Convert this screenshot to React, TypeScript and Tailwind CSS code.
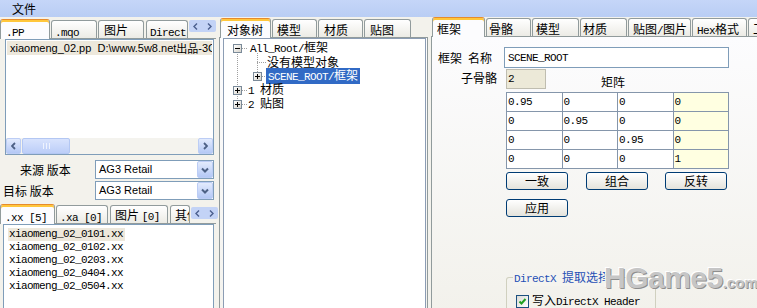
import type { ReactNode } from 'react';

const mono = "font-['Liberation_Mono','Noto_Sans_CJK_SC',monospace] text-[11px] tracking-[-0.6px]";

function M({ children }: { children: ReactNode }) {
  return <span className={mono}>{children}</span>;
}

function Tab({ children, active, className = '' }: { children: ReactNode; active?: boolean; className?: string }) {
  if (active) {
    return (
      <div
        className={`relative z-10 -mb-px h-[20px] shrink-0 overflow-hidden whitespace-nowrap rounded-t-[3px] border border-b-0 border-[#919b9c] border-t-[#e68b2c] bg-[#fcfcfe] pt-[2px] leading-[15px] shadow-[inset_0_2px_0_#ffc73c] ${className}`}
      >
        {children}
      </div>
    );
  }
  return (
    <div
      className={`h-[18px] shrink-0 overflow-hidden whitespace-nowrap rounded-t-[3px] border border-b-0 border-[#919b9c] bg-gradient-to-b from-white to-[#ecebe5] pt-[1px] leading-[15px] ${className}`}
    >
      {children}
    </div>
  );
}

function TabArrows({ className = '' }: { className?: string }) {
  return (
    <div className={`flex h-[12px] w-[27px] shrink-0 self-start items-center justify-around rounded-[2px] bg-[#c3d3f6] ${className}`}>
      <svg width="5" height="7" viewBox="0 0 5 7">
        <path d="M4 0.5 L1 3.5 L4 6.5" stroke="#4b5f8e" strokeWidth="1.4" fill="none" />
      </svg>
      <svg width="5" height="7" viewBox="0 0 5 7">
        <path d="M1 0.5 L4 3.5 L1 6.5" stroke="#4b5f8e" strokeWidth="1.4" fill="none" />
      </svg>
    </div>
  );
}

function Combo({ value }: { value: string }) {
  return (
    <div className="flex h-[19px] w-[119px] items-center border border-[#7f9db9] bg-white pl-[3px]">
      <span className="flex-1 font-['Liberation_Sans',sans-serif] text-[11px] leading-[13px]">{value}</span>
      <div className="flex h-[17px] w-[16px] items-center justify-center rounded-[2px] border border-[#bccdf5] bg-gradient-to-b from-[#e3ebfd] to-[#b4c8f5]">
        <svg width="8" height="6" viewBox="0 0 8 6">
          <path d="M1 1.5 L4 4.5 L7 1.5" stroke="#4d6185" strokeWidth="2" fill="none" />
        </svg>
      </div>
    </div>
  );
}

function ScrollBtn({ dir }: { dir: 'left' | 'right' }) {
  return (
    <div className="flex h-[16px] w-[15px] items-center justify-center rounded-[2px] border border-[#bccdf5] bg-gradient-to-b from-[#e3ebfd] to-[#b4c8f5]">
      <svg width="5" height="8" viewBox="0 0 5 8">
        <path d={dir === 'left' ? 'M4 1 L1 4 L4 7' : 'M1 1 L4 4 L1 7'} stroke="#4d6185" strokeWidth="1.8" fill="none" />
      </svg>
    </div>
  );
}

function Expander({ open }: { open?: boolean }) {
  return (
    <span className="flex h-[9px] w-[9px] shrink-0 items-center justify-center border border-[#7a8a99] bg-gradient-to-br from-white to-[#d6d3cb]">
      <svg width="7" height="7" viewBox="0 0 7 7">
        <path d={open ? 'M1 3.5h5' : 'M1 3.5h5M3.5 1v5'} stroke="#000" strokeWidth="1" />
      </svg>
    </span>
  );
}

function XpButton({ children }: { children: ReactNode }) {
  return (
    <button
      type="button"
      className="flex h-[18px] w-[62px] items-center justify-center rounded-[3px] border border-[#003c74] bg-gradient-to-b from-white to-[#e4e3dc] text-[12px] leading-[14px]"
    >
      {children}
    </button>
  );
}

const matrix = [
  ['0.95', '0', '0', '0'],
  ['0', '0.95', '0', '0'],
  ['0', '0', '0.95', '0'],
  ['0', '0', '0', '1'],
];

const xxFiles = ['xiaomeng_02_0101.xx', 'xiaomeng_02_0102.xx', 'xiaomeng_02_0203.xx', 'xiaomeng_02_0404.xx', 'xiaomeng_02_0504.xx'];

function LeftPanel() {
  return (
    <div className="flex w-[216px] shrink-0 flex-col pt-[1px]">
      <div className="flex h-[21px] items-end gap-[1px] border-b border-[#919b9c]">
        <Tab active className="w-[50px] pl-[5px] pt-[3px]">
          <M>.PP</M>
        </Tab>
        <Tab className="w-[46px] pl-[3px] pt-[2px]">
          <M>.mqo</M>
        </Tab>
        <Tab className="w-[46px] pl-[5px]">图片</Tab>
        <Tab className="ml-[1px] w-[42px] pl-[3px] pt-[2px]">
          <M>Direct</M>
        </Tab>
        <TabArrows className="mt-[2px]" />
      </div>
      <div className="pl-[5px] pr-[2px]">
        <div className="flex h-[116px] flex-col border border-[#7f9db9] bg-white">
          <div className="mx-px mt-px flex h-[14px] items-center overflow-hidden whitespace-nowrap bg-[#ede8dc] pl-[3px]">
            <span className="font-['Liberation_Sans',sans-serif] text-[11px] leading-[13px]">xiaomeng_02.pp&nbsp; D:\www.5w8.net</span>
            <span className="text-[11px] leading-[13px]">出品</span>
            <span className="font-['Liberation_Sans',sans-serif] text-[11px] leading-[13px]">-3C</span>
          </div>
          <div className="flex-1" />
          <div className="flex h-[16px] bg-[#f4f3ee]">
            <ScrollBtn dir="left" />
            <div className="ml-px flex w-[48px] items-center justify-center gap-[2px] rounded-[2px] border border-[#b3c7f3] bg-gradient-to-b from-[#d8e3fd] to-[#bccef8]">
              <span className="h-[6px] w-px bg-[#eef3fe]" />
              <span className="h-[6px] w-px bg-[#eef3fe]" />
              <span className="h-[6px] w-px bg-[#eef3fe]" />
            </div>
            <div className="flex-1" />
            <ScrollBtn dir="right" />
          </div>
        </div>
      </div>
      <div className="mt-[5px] flex items-center">
        <span className="w-[95px] pl-[20px] leading-[14px]">来源 版本</span>
        <Combo value="AG3 Retail" />
      </div>
      <div className="mt-[2px] flex items-center">
        <span className="w-[95px] pl-[3px] leading-[14px]">目标 版本</span>
        <Combo value="AG3 Retail" />
      </div>
      <div className="mt-[3px] flex h-[21px] items-end gap-[1px] border-b border-[#919b9c]">
        <Tab active className="w-[55px] pl-[4px] pt-[3px]">
          <M>.xx [5]</M>
        </Tab>
        <Tab className="w-[52px] pl-[3px] pt-[2px]">
          <M>.xa [0]</M>
        </Tab>
        <Tab className="ml-[1px] w-[58px] pl-[4px]">
          图片 <M>[0]</M>
        </Tab>
        <Tab className="ml-[1px] w-[20px] pl-[4px]">其他</Tab>
        <TabArrows className="mt-[4px]" />
      </div>
      <div className="flex flex-1 pl-[3px] pr-[2px]">
        <div className="flex-1 border border-b-0 border-[#7f9db9] bg-white pt-[3px] pl-[4px]">
          {xxFiles.map((f, i) => (
            <div key={f} className={`flex h-[13px] w-[117px] items-center pl-[1px] leading-[13px] ${i === 0 ? 'bg-[#ede8dc]' : ''}`}>
              <M>{f}</M>
            </div>
          ))}
        </div>
      </div>
    </div>
  );
}

function MiddlePanel() {
  return (
    <div className="flex w-[209px] shrink-0 flex-col">
      <div className="flex h-[21px] items-end gap-[1px] border-b border-[#919b9c] pl-[1px]">
        <Tab active className="w-[51px] pl-[6px] pt-[3px]">对象树</Tab>
        <Tab className="w-[45px] pl-[4px] pt-[2px]">模型</Tab>
        <Tab className="w-[45px] pl-[5px] pt-[2px]">材质</Tab>
        <Tab className="w-[47px] pl-[5px] pt-[2px]">贴图</Tab>
      </div>
      <div className="flex flex-1 border-x border-[#919b9c] bg-gradient-to-b from-[#fcfcfe] to-[#f4f3ee] pl-[3px] pr-px">
        <div className="relative flex-1 border border-b-0 border-[#8c9db4] bg-white pt-[2px]">
          <svg className="absolute left-0 top-0" width="200" height="80">
            <g stroke="#a0a0a0" strokeDasharray="1 1" fill="none">
              <path d="M13.5 9 V65" />
              <path d="M33.5 14 V37" />
              <path d="M33 23.5 H42" />
              <path d="M38 37.5 H42" />
              <path d="M18 9.5 H24" />
              <path d="M18 51.5 H23" />
              <path d="M18 65.5 H23" />
            </g>
          </svg>
          <div className="relative flex h-[14px] items-center pl-[9px]">
            <Expander open />
            <span className="ml-[8px] leading-[14px]">
              <M>All_Root/</M>框架
            </span>
          </div>
          <div className="relative flex h-[14px] items-center pl-[43px]">
            <span className="leading-[14px]">没有模型对象</span>
          </div>
          <div className="relative flex h-[14px] items-center pl-[29px]">
            <Expander />
            <span className="ml-[4px] bg-[#316ac5] px-[2px] leading-[14px] text-white">
              <M>SCENE_ROOT/</M>框架
            </span>
          </div>
          <div className="relative flex h-[14px] items-center pl-[9px]">
            <Expander />
            <span className="ml-[6px] leading-[14px]">
              <M>1 </M>材质
            </span>
          </div>
          <div className="relative flex h-[14px] items-center pl-[9px]">
            <Expander />
            <span className="ml-[6px] leading-[14px]">
              <M>2 </M>贴图
            </span>
          </div>
        </div>
      </div>
    </div>
  );
}

function RightPanel() {
  return (
    <div className="flex min-w-0 flex-1 flex-col overflow-hidden">
      <div className="flex h-[21px] items-end gap-[1px] border-b border-[#919b9c] pl-[1px]">
        <Tab active className="w-[53px] pl-[4px] pt-[3px]">框架</Tab>
        <Tab className="w-[45px] pl-[2px] pt-[2px]">骨骼</Tab>
        <Tab className="w-[47px] pl-[3px] pt-[2px]">模型</Tab>
        <Tab className="w-[47px] pl-[2px] pt-[2px]">材质</Tab>
        <Tab className="w-[63px] pl-[4px] pt-[2px]">
          贴图<M>/</M>图片
        </Tab>
        <Tab className="w-[55px] pl-[4px] pt-[2px]">
          <M>Hex</M>格式
        </Tab>
        <Tab className="w-[30px] pl-[4px] pt-[2px]">工具</Tab>
      </div>
      <div className="flex flex-1 flex-col border-l border-[#919b9c] bg-gradient-to-b from-[#fcfcfe] to-[#f2f1eb] pl-[6px] pt-[10px]">
        <div className="flex items-center">
          <span className="w-[66px] leading-[14px]">
            框架<span className="inline-block w-[6px]" />名称
          </span>
          <div className="flex h-[21px] w-[225px] items-center border border-[#7f9db9] bg-white pl-[3px]">
            <M>SCENE_ROOT</M>
          </div>
        </div>
        <div className="mt-px flex items-start">
          <span className="w-[68px] pr-[9px] pt-[2px] text-right leading-[14px]">子骨骼</span>
          <div className="flex h-[20px] w-[40px] items-center border border-[#bfbdb0] bg-[#ece9d8] pl-px">
            <M>2</M>
          </div>
          <span className="ml-[55px] mt-[6px] leading-[14px]">矩阵</span>
        </div>
        <div className="ml-[68px] mt-[3px] grid w-[223px] grid-cols-4 gap-px border border-[#8596ab] bg-[#8596ab]">
          {matrix.flatMap((row, r) =>
            row.map((v, c) => (
              <div key={`${r}-${c}`} className={`flex h-[18px] items-center pl-px ${c === 3 ? 'bg-[#ffffe1]' : 'bg-white'}`}>
                <M>{v}</M>
              </div>
            )),
          )}
        </div>
        <div className="ml-[68px] mt-[3px] flex">
          <XpButton>一致</XpButton>
          <div className="ml-[18px]">
            <XpButton>组合</XpButton>
          </div>
          <div className="ml-[17px]">
            <XpButton>反转</XpButton>
          </div>
        </div>
        <div className="ml-[68px] mt-[9px]">
          <XpButton>应用</XpButton>
        </div>
        <div className="ml-[68px] mt-[60px] h-[40px] w-[150px] rounded-t-[3px] border border-b-0 border-[#d0d0bf] pl-[6px]">
          <div className="-mt-[8px] w-fit bg-[#f5f4ef] pl-px pr-[2px] leading-[14px] text-[#1f4fb5]">
            <M>DirectX </M>提取选择
          </div>
          <div className="mt-[7px] flex items-center pl-[3px]">
            <span className="flex h-[13px] w-[13px] items-center justify-center border border-[#1c5180] bg-gradient-to-br from-[#dcdcd7] to-white">
              <svg width="9" height="9" viewBox="0 0 9 9">
                <path d="M1.5 4.5 L3.5 6.5 L7.5 2" stroke="#21a121" strokeWidth="2" fill="none" />
              </svg>
            </span>
            <span className="ml-[3px] leading-[14px]">
              写入<M>DirectX Header</M>
            </span>
          </div>
        </div>
      </div>
    </div>
  );
}

export default function App() {
  return (
    <div className="relative h-[308px] w-[757px] overflow-hidden bg-[#f3f2ec] font-['Noto_Sans_CJK_SC',sans-serif] text-[12px] leading-[14px] text-black">
      <div className="h-[17px] bg-gradient-to-b from-[#c5d6f8] to-[#b9cdf4] pl-[12px] pt-px leading-[15px]">文件</div>
      <div className="flex h-[291px]">
        <LeftPanel />
        <div className="w-[3px] shrink-0" />
        <MiddlePanel />
        <div className="w-[3px] shrink-0" />
        <RightPanel />
      </div>
      <div className="pointer-events-none absolute left-[604px] top-[262px] flex items-baseline font-['Liberation_Sans',sans-serif] font-bold text-[#c6c6c6] [text-shadow:1px_1px_0_#8e8e8e,-1px_-1px_0_#ffffff]">
        <span className="text-[30px] leading-[32px] tracking-[-0.5px]">HGame5</span>
        <span className="text-[15px] leading-[16px]">.com</span>
      </div>
    </div>
  );
}
